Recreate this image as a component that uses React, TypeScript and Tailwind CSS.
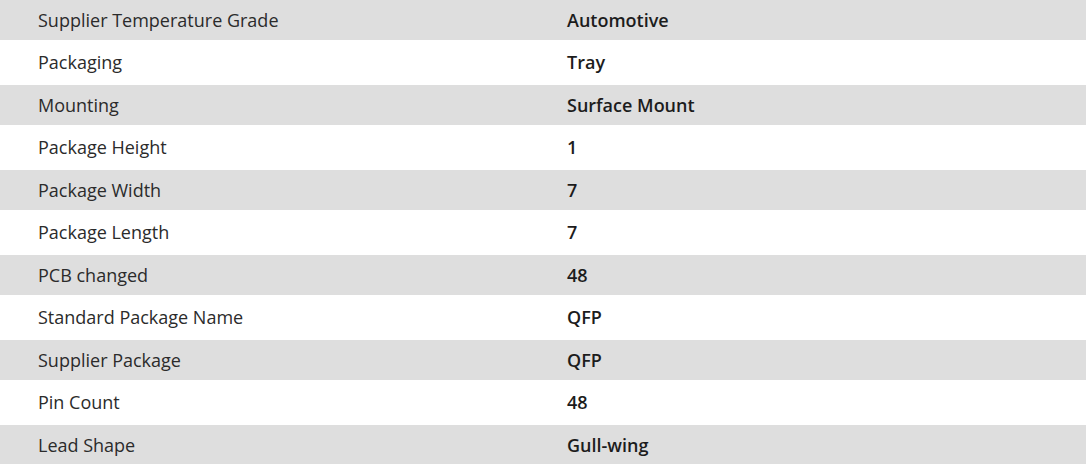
import React from "react";

const rows: [string, string][] = [
  ["Supplier Temperature Grade", "Automotive"],
  ["Packaging", "Tray"],
  ["Mounting", "Surface Mount"],
  ["Package Height", "1"],
  ["Package Width", "7"],
  ["Package Length", "7"],
  ["PCB changed", "48"],
  ["Standard Package Name", "QFP"],
  ["Supplier Package", "QFP"],
  ["Pin Count", "48"],
  ["Lead Shape", "Gull-wing"],
];

export default function App() {
  return (
    <div
      className="w-[1086px] h-[464px] overflow-hidden bg-white"
      style={{ fontFamily: '"Open Sans", "Noto Sans", sans-serif' }}
    >
      {rows.map(([k, v], i) => (
        <div
          key={k}
          className={`flex items-center ${i % 2 === 0 ? "h-[40px] bg-[#dedede]" : "h-[45px] bg-white"}`}
        >
          <div className="w-[567px] pl-[38px] text-[18px] text-[#2b2b2b]">{k}</div>
          <div className="text-[18px] font-semibold text-[#1c1c1c]">{v}</div>
        </div>
      ))}
    </div>
  );
}
